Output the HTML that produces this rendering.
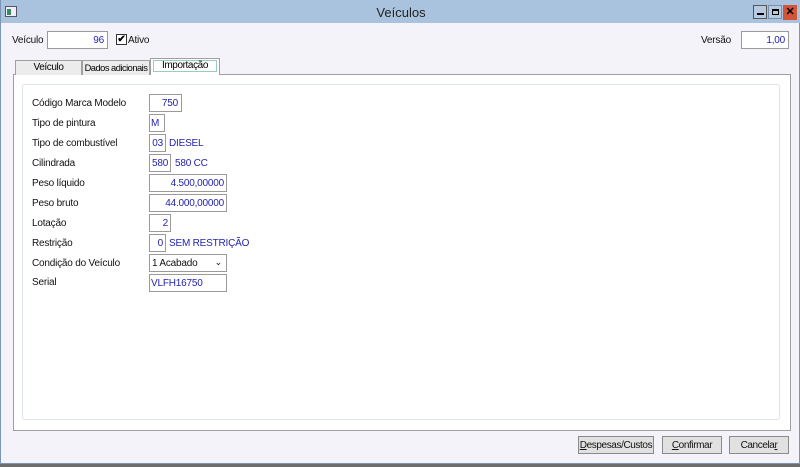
<!DOCTYPE html>
<html><head><meta charset="utf-8"><style>
*{box-sizing:border-box;margin:0;padding:0}
body{width:800px;height:467px;overflow:hidden;background:#6d6d6d;font-family:"Liberation Sans",sans-serif;font-size:10px;color:#000;position:relative;letter-spacing:-0.2px;white-space:nowrap}
.win{position:absolute;left:0;top:0;width:800px;height:464px;background:#f3f3f9;border:1px solid #7b95b5;border-top:none}
.title{position:absolute;left:0;top:0;width:800px;height:23px;background:#a9c3de;text-align:center;font-size:13px;line-height:26px;color:#222;letter-spacing:0}
.a{position:absolute}
.inp{position:absolute;background:#fff;border:1px solid #9a9a9a;height:18px;color:#2323b0;font-size:10px;line-height:18px;padding:0 3px}
.r{text-align:right}
.lbl{position:absolute;font-size:10px;color:#111}
.blue{position:absolute;font-size:10px;color:#2323b0}
.btn{position:absolute;top:436px;height:18px;background:#e1e1e1;border:1px solid #8a8a8a;font-size:10px;text-align:center;line-height:17px;color:#111;letter-spacing:-0.4px}
.tab{position:absolute;top:60px;height:15px;background:#ececec;border:1px solid #a0a0a0;border-bottom:none;font-size:10px;text-align:center;line-height:14px;letter-spacing:-0.4px;overflow:hidden}
</style></head><body>
<div class="win">
<div class="title">Veículos</div>
<div class="a" style="left:4px;top:6px;width:12px;height:11px;background:#eef;border:1px solid #556"><div style="position:absolute;left:1px;top:2px;width:4px;height:6px;background:#3a8a5a"></div></div>
<div class="a" style="left:752px;top:5px;width:14px;height:14px;border:1px solid #555;background:#b6cbe2"><div style="position:absolute;left:3px;top:7px;width:7px;height:2px;background:#000"></div></div>
<div class="a" style="left:767px;top:5px;width:14px;height:14px;border:1px solid #7a90aa;background:#b6cbe2"><div style="position:absolute;left:3px;top:3px;width:7px;height:6px;border:1px solid #000;border-top-width:2px"></div></div>
<div class="a" style="left:782px;top:5px;width:14px;height:15px;background:#d2553a;color:#000;font-weight:bold;font-size:11px;text-align:center;line-height:14px">✕</div>

<div class="lbl" style="left:11px;top:35px">Veículo</div>
<div class="inp r" style="left:46px;top:31px;width:61px">96</div>
<div class="a" style="left:115px;top:34px;width:11px;height:11px;border:1px solid #333;background:#fff;font-size:10px;line-height:9px;text-align:center;font-weight:bold">✔</div>
<div class="lbl" style="left:127px;top:35px">Ativo</div>
<div class="lbl" style="left:700px;top:35px">Versão</div>
<div class="inp r" style="left:740px;top:31px;width:48px">1,00</div>

<div class="a" style="left:12px;top:74px;width:778px;height:357px;background:#fff;border:1px solid #a0a0a0"></div>
<div class="tab" style="left:14px;width:67px">Veículo</div>
<div class="tab" style="left:81px;width:68px;font-size:9.3px;letter-spacing:-0.5px">Dados adicionais</div>
<div class="tab" style="left:149px;top:58px;height:17px;width:70px;background:#fff;line-height:15px"><div style="border:1px solid #9cb;height:12px;margin:1px 2px 0;line-height:10px">Importação</div></div>
<div class="a" style="left:21px;top:84px;width:758px;height:336px;background:#fff;border:1px solid #dde3ea;border-radius:3px"></div>

<div class="lbl" style="left:31px;top:98px">Código Marca Modelo</div>
<div class="inp r" style="left:148px;top:94px;width:33px">750</div>
<div class="lbl" style="left:31px;top:118px">Tipo de pintura</div>
<div class="inp" style="left:148px;top:114px;width:16px;padding:0 1px">M</div>
<div class="lbl" style="left:31px;top:138px">Tipo de combustível</div>
<div class="inp r" style="left:148px;top:134px;width:17px;padding:0 2px">03</div>
<div class="blue" style="left:168px;top:138px">DIESEL</div>
<div class="lbl" style="left:31px;top:158px">Cilindrada</div>
<div class="inp r" style="left:148px;top:154px;width:22px;padding:0 2px">580</div>
<div class="blue" style="left:174px;top:158px">580 CC</div>
<div class="lbl" style="left:31px;top:178px">Peso líquido</div>
<div class="inp r" style="left:148px;top:174px;width:78px;padding:0 2px">4.500,00000</div>
<div class="lbl" style="left:31px;top:198px">Peso bruto</div>
<div class="inp r" style="left:148px;top:194px;width:78px;padding:0 2px">44.000,00000</div>
<div class="lbl" style="left:31px;top:218px">Lotação</div>
<div class="inp r" style="left:148px;top:214px;width:22px;padding:0 2px">2</div>
<div class="lbl" style="left:31px;top:238px">Restrição</div>
<div class="inp r" style="left:148px;top:234px;width:17px;padding:0 2px">0</div>
<div class="blue" style="left:168px;top:238px">SEM RESTRIÇÃO</div>
<div class="lbl" style="left:31px;top:258px">Condição do Veículo</div>
<div class="inp" style="left:148px;top:254px;width:78px;color:#111;padding:0 2px">1 Acabado<span style="position:absolute;right:4px;top:-2px;font-size:9px">⌄</span></div>
<div class="lbl" style="left:31px;top:277px">Serial</div>
<div class="inp" style="left:148px;top:274px;width:78px;padding:0 1px">VLFH16750</div>

<div class="btn" style="left:577px;width:76px"><u>D</u>espesas/Custos</div>
<div class="btn" style="left:661px;width:60px"><u>C</u>onfirmar</div>
<div class="btn" style="left:728px;width:60px">Cancela<u>r</u></div>
</div>
</body></html>
